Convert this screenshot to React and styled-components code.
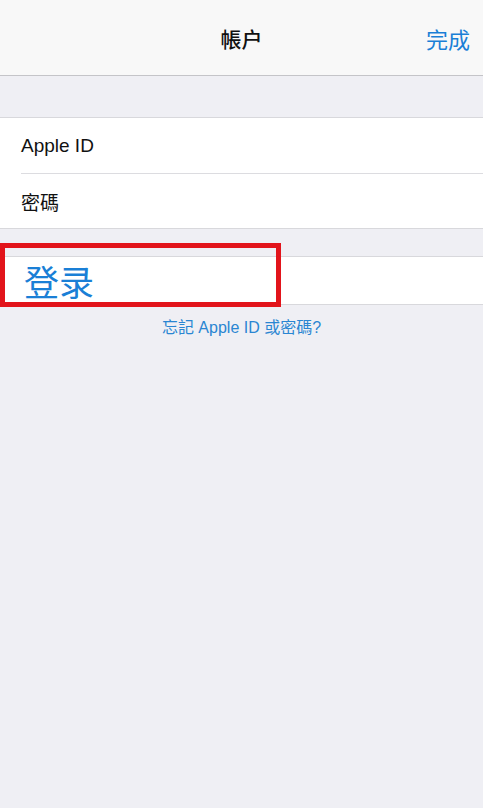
import React from "react";
import styled, { createGlobalStyle } from "styled-components";

const Global = createGlobalStyle`
  html, body { margin: 0; padding: 0; background: #efeff4; }
  body { font-family: "Liberation Sans", "Noto Sans CJK SC", "Noto Sans CJK TC", sans-serif; }
`;

const Page = styled.div`
  width: 483px;
  height: 808px;
  background: #efeff4;
  position: relative;
  overflow: hidden;
`;

const NavBar = styled.div`
  height: 75px;
  background: #f8f8f8;
  border-bottom: 1px solid #c4c4c8;
  display: grid;
  grid-template-columns: 1fr auto 1fr;
  align-items: center;
`;

const Title = styled.div`
  grid-column: 2;
  font-size: 21px;
  font-weight: 500;
  color: #111;
  font-family: "Noto Sans CJK SC", sans-serif;
  padding-top: 1px;
`;

const NavButton = styled.div`
  justify-self: end;
  padding-right: 13px;
  font-size: 22px;
  color: #1a7fd6;
  font-family: "Noto Sans CJK SC", sans-serif;
`;

const Gap = styled.div`
  height: ${(p) => p.$h}px;
`;

const Group = styled.div`
  background: #fff;
  border-top: 1px solid #d8d8dc;
  border-bottom: 1px solid #d8d8dc;
`;

const Cell = styled.div`
  height: ${(p) => p.$h}px;
  margin-left: 21px;
  display: flex;
  align-items: center;
  font-size: 19px;
  color: #111;
  font-family: "Liberation Sans", "Noto Sans CJK TC", sans-serif;
  & + & {
    border-top: 1px solid #dcdce0;
  }
`;

const SignIn = styled.div`
  height: 47px;
  display: flex;
  align-items: center;
  padding-left: 24px;
  font-size: 35px;
  color: #1a7fd6;
  font-family: "Noto Sans CJK SC", sans-serif;
`;

const Link = styled.div`
  text-align: center;
  margin-top: 9px;
  font-size: 16px;
  color: #2a86d2;
  font-family: "Liberation Sans", "Noto Sans CJK TC", sans-serif;
`;

const Highlight = styled.div`
  position: absolute;
  left: 0;
  top: 243px;
  width: 271px;
  height: 54px;
  border: 5px solid #e2141b;
  pointer-events: none;
`;

export default function App() {
  return (
    <>
      <Global />
      <Page>
        <NavBar>
          <Title>帳户</Title>
          <NavButton>完成</NavButton>
        </NavBar>
        <Gap $h={41} />
        <Group>
          <Cell $h={55}>Apple ID</Cell>
          <Cell $h={54}>密碼</Cell>
        </Group>
        <Gap $h={27} />
        <Group>
          <SignIn>登录</SignIn>
        </Group>
        <Link>忘記 Apple ID 或密碼?</Link>
        <Highlight />
      </Page>
    </>
  );
}
